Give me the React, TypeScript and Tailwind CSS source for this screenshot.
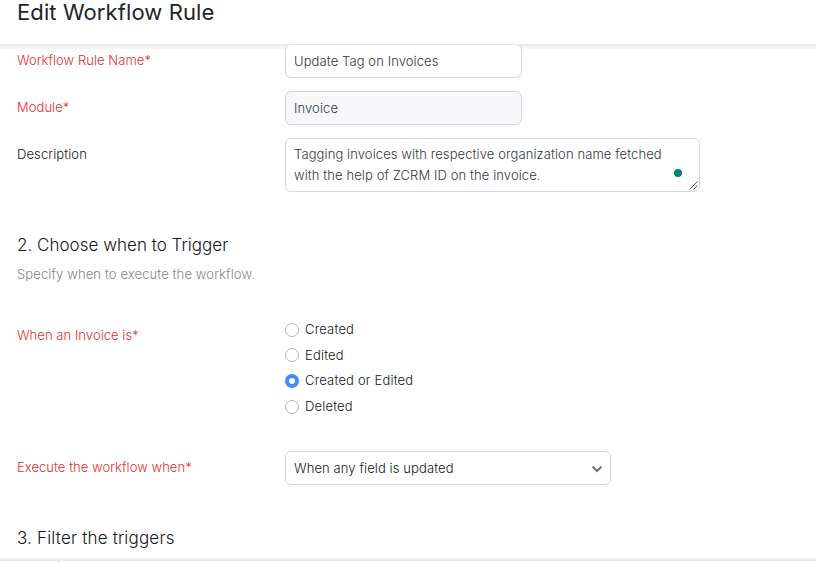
import type { ReactNode } from "react";

function Row({ label, required = false, className, children }: {
  label: string;
  required?: boolean;
  className: string;
  children: ReactNode;
}) {
  return (
    <div className={"flex items-start " + className}>
      <div className={"w-[268px] shrink-0 pt-[6px] " + (required ? "tracking-[0.05px] text-[#df302d]" : "text-[#14181c]")}>
        {label}{required && "*"}
      </div>
      {children}
    </div>
  );
}

function Radio({ label, checked = false }: { label: string; checked?: boolean }) {
  return (
    <label className="flex h-5 items-center gap-[6px]">
      <span
        className={
          "mt-px size-[14px] shrink-0 rounded-full bg-white " +
          (checked ? "border-4 border-[#408dfb]" : "border border-[#b5b5b5]")
        }
      />
      {label}
    </label>
  );
}

export default function App() {
  return (
    <div className="flex h-[563px] w-[816px] flex-col overflow-hidden bg-white font-['Inter',sans-serif] text-[13px] leading-5 font-light tracking-[0.1px] text-[#14181c]">
      <header className="h-11 shrink-0 px-[17px]">
        <h1 className="-mt-[2px] text-[22px] leading-7 font-normal tracking-[0.1px] text-[#212529]">Edit Workflow Rule</h1>
      </header>
      <main className="relative h-[513px] shrink-0 overflow-hidden px-[17px]">
        <div className="absolute inset-x-0 top-0 h-[5px] border-t border-[#e9e9e9] bg-linear-to-b from-[#ededed] to-[#f7f7f7]" />
        <Row label="Workflow Rule Name" required className="relative h-[47px]">
          <div className="h-[34px] w-[237px] rounded-md border border-[#d7d5e2] border-t-[#e5e4e9] bg-white px-2 pt-[6px] text-[#32383e]">
            Update Tag on Invoices
          </div>
        </Row>
        <Row label="Module" required className="h-[47px]">
          <div className="h-[34px] w-[237px] rounded-md border border-[#d7d5e2] bg-[#f8f8fb] px-2 pt-[6px] text-[#32383e]">
            Invoice
          </div>
        </Row>
        <Row label="Description" className="h-[96px]">
          <div className="relative h-[54px] w-[415px] rounded-md border border-[#d7d5e2] px-2 pt-[5px] leading-[21px] text-[#32383e]">
            Tagging invoices with respective organization name fetched
            <br />
            with the help of ZCRM ID on the invoice.
            <span className="absolute top-[30px] right-[17px] size-2 rounded-full bg-[#018474]" />
            <svg className="absolute right-px bottom-px" width="9" height="9" viewBox="0 0 9 9" stroke="#555" strokeWidth="1">
              <path d="M.5 8.5 8.5 .5M4.5 8.5 8.5 4.5" />
            </svg>
          </div>
        </Row>
        <section>
          <h2 className="text-[17px] leading-[22px] tracking-[0.02px]">2. Choose when to Trigger</h2>
          <p className="mt-[8px] tracking-[0.12px] text-[#858585]">Specify when to execute the workflow.</p>
        </section>
        <Row label="When an Invoice is" required className="mt-[35px] h-[132px]">
          <div className="flex flex-col gap-[5.7px] tracking-[0.18px]">
            <Radio label="Created" />
            <Radio label="Edited" />
            <Radio label="Created or Edited" checked />
            <Radio label="Deleted" />
          </div>
        </Row>
        <Row label="Execute the workflow when" required className="h-[76px]">
          <div className="flex h-[34px] w-[326px] items-center justify-between rounded-md border border-[#d7d5e2] pr-[7px] pl-2">
            <span>When any field is updated</span>
            <svg width="12" height="8" viewBox="0 0 12 8" fill="none" stroke="#6c718a" strokeWidth="2" className="mt-[2px]">
              <path d="m1.5 1.5 4.5 4.5 4.5-4.5" />
            </svg>
          </div>
        </Row>
        <h2 className="text-[17px] leading-[22px] tracking-[0.18px]">3. Filter the triggers</h2>
      </main>
      <footer className="flex-1">
        <div className="h-1 border-b border-[#e7e7e7] bg-linear-to-b from-[#fbfbfb] to-[#eeeeee]" />
        <div className="ml-[58px] h-[2px] w-[2px] bg-[#e5e5e5]" />
      </footer>
    </div>
  );
}
